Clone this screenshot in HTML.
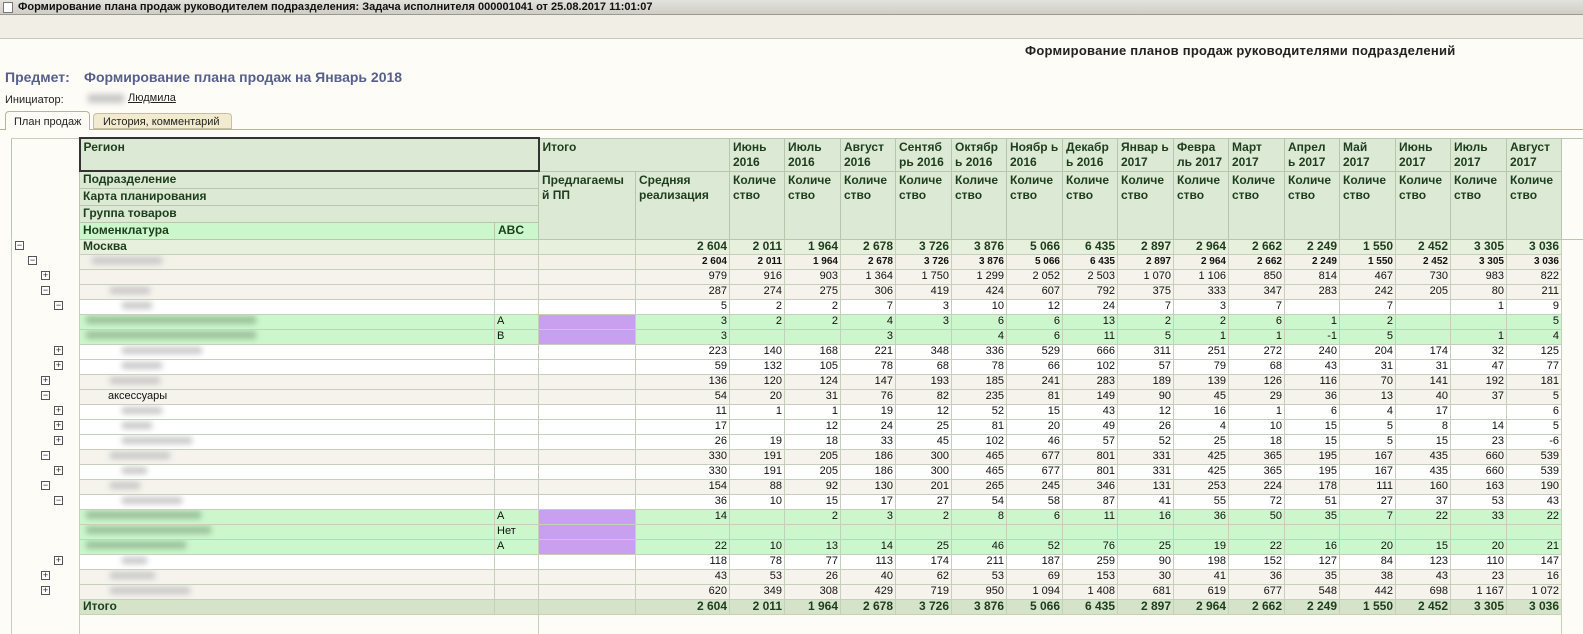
<!DOCTYPE html>
<html><head><meta charset="utf-8">
<style>
*{box-sizing:border-box;margin:0;padding:0}
body{width:1583px;height:629px;overflow:hidden;background:#fdfcf6;font-family:"Liberation Sans",Arial,sans-serif;position:relative}
.title{position:absolute;left:0;top:0;width:1583px;height:15px;background:linear-gradient(#e4e2dc,#cfcdc6);border-bottom:1px solid #9a9890;font-size:11px;font-weight:bold;line-height:14px;padding-left:18px;color:#111}
.title i{position:absolute;left:3px;top:2px;width:10px;height:11px;border:1px solid #777;background:#fff}
.tool{position:absolute;left:0;top:15px;width:1583px;height:24px;background:#f0eee5;border-bottom:1px solid #c9c6b8}
.h1{position:absolute;left:1025px;top:43px;font-size:13px;font-weight:bold;color:#222;letter-spacing:0.25px}
.pr{position:absolute;left:5px;top:69px;font-size:14px;font-weight:bold;color:#56608a}
.pv{position:absolute;left:84px;top:69px;font-size:14px;font-weight:bold;color:#56608a}
.in{position:absolute;left:5px;top:94px;font-size:11px;color:#222}
.iv{position:absolute;left:128px;top:92px;font-size:11px;color:#222;text-decoration:underline}
.blur{position:absolute;background:#c8c8c8;filter:blur(3px)}
.tab1{position:absolute;left:5px;top:111px;width:85px;height:19px;border:1px solid #b9b39b;border-bottom:none;border-radius:4px 4px 0 0;background:#fdfcf6;font-size:11px;padding:4px 0 0 8px;color:#222;z-index:2}
.tab2{position:absolute;left:93px;top:113px;width:139px;height:16px;border:1px solid #c7bf9f;border-radius:4px 4px 0 0;background:#f2ebcf;font-size:11px;padding:2px 0 0 9px;color:#222}
.tl{position:absolute;left:0;top:129px;width:1583px;border-top:1px solid #b9b39b}
table{position:absolute;left:11px;top:137px;width:1572px;border-collapse:collapse;table-layout:fixed;font-size:11px;color:#111}
td{border:1px solid #c6cfbb;height:15px;line-height:13px;padding:0 2px 0 2px;text-align:right;white-space:nowrap;overflow:hidden}
tr.hd td{background:#dce9d4;color:#1d3d1d;font-weight:bold;font-size:12px;text-align:left;vertical-align:top;line-height:15px;padding:1px 3px;border-color:#b8c6ac;white-space:normal}
td.t{border:none;border-left:1px solid #c6cfbb;border-right:1px solid #c6cfbb;background:#fdfcf6;position:relative;overflow:visible}
tr.g td{background:#e6f0dc;font-weight:bold;font-size:12px;color:#1d3d1d}
tr.s td{background:#f3f1e8;font-weight:bold;font-size:10px}
tr.b td{background:#f5f3ec}
tr.w td{background:#fff}
tr.n td{background:#ccf7cc}
tr.n td.p{background:#c9a0f0}
tr.tot td{background:#d5e4c9;font-weight:bold;font-size:12px;color:#1d3d1d}
tr td.t{background:#fdfcf6!important}
td.l{text-align:left}
.x{position:absolute;top:2px;width:9px;height:9px;border:1px solid #555;background:#fff;font-size:9px;line-height:7px;text-align:center;color:#222;font-weight:normal}
</style></head><body>
<div class="title"><i></i>Формирование плана продаж руководителем подразделения: Задача исполнителя 000001041 от 25.08.2017 11:01:07</div>
<div class="tool"></div>
<div class="h1">Формирование планов продаж руководителями подразделений</div>
<div class="pr">Предмет:</div>
<div class="pv">Формирование плана продаж на Январь 2018</div>
<div class="in">Инициатор:</div>
<div class="blur" style="left:88px;top:94px;width:36px;height:9px"></div>
<div class="iv">Людмила</div>
<div class="tab1">План продаж</div>
<div class="tab2">История, комментарий</div>
<div class="tl"></div>
<table>
<colgroup><col style="width:68px"><col style="width:415px"><col style="width:44px"><col style="width:97px"><col style="width:94px">
<col style="width:55px"><col style="width:56px"><col style="width:55px"><col style="width:56px"><col style="width:55px"><col style="width:56px"><col style="width:55px"><col style="width:56px"><col style="width:55px"><col style="width:56px"><col style="width:55px"><col style="width:56px"><col style="width:55px"><col style="width:56px"><col style="width:55px"><col style="width:22px"></colgroup>
<tr class="hd" style="height:31px"><td class="t" rowspan="5" style="border-top:1px solid #c6cfbb"></td><td colspan="2" style="border:2px solid #333">Регион</td><td colspan="2">Итого</td><td>Июнь 2016</td><td>Июль 2016</td><td>Август 2016</td><td>Сентяб рь 2016</td><td>Октябр ь 2016</td><td>Ноябр ь 2016</td><td>Декабр ь 2016</td><td>Январ ь 2017</td><td>Февра ль 2017</td><td>Март 2017</td><td>Апрел ь 2017</td><td>Май 2017</td><td>Июнь 2017</td><td>Июль 2017</td><td>Август 2017</td><td rowspan="5" style="background:#fdfcf6;border-right:none"></td></tr>
<tr class="hd" style="height:17px"><td colspan="2" style="padding:0 3px">Подразделение</td><td rowspan="4">Предлагаемы й ПП</td><td rowspan="4">Средняя реализация</td><td rowspan="4">Количе ство</td><td rowspan="4">Количе ство</td><td rowspan="4">Количе ство</td><td rowspan="4">Количе ство</td><td rowspan="4">Количе ство</td><td rowspan="4">Количе ство</td><td rowspan="4">Количе ство</td><td rowspan="4">Количе ство</td><td rowspan="4">Количе ство</td><td rowspan="4">Количе ство</td><td rowspan="4">Количе ство</td><td rowspan="4">Количе ство</td><td rowspan="4">Количе ство</td><td rowspan="4">Количе ство</td><td rowspan="4">Количе ство</td></tr>
<tr class="hd" style="height:17px"><td colspan="2" style="padding:0 3px">Карта планирования</td></tr>
<tr class="hd" style="height:17px"><td colspan="2" style="padding:0 3px">Группа товаров</td></tr>
<tr class="hd" style="height:17px"><td style="background:#ccf7cc;padding:0 3px">Номенклатура</td><td style="background:#ccf7cc;padding:0 3px">ABC</td></tr>

<tr class="g"><td class="t"><span class="x" style="left:3px">−</span></td><td class="l" style="padding-left:3px">Москва</td><td></td><td></td><td>2 604</td><td>2 011</td><td>1 964</td><td>2 678</td><td>3 726</td><td>3 876</td><td>5 066</td><td>6 435</td><td>2 897</td><td>2 964</td><td>2 662</td><td>2 249</td><td>1 550</td><td>2 452</td><td>3 305</td><td>3 036</td><td class="t"></td></tr>
<tr class="s"><td class="t"><span class="x" style="left:16px">−</span></td><td class="l"><span class="blur" style="position:relative;display:inline-block;left:10px;width:70px;height:7px"></span></td><td></td><td></td><td>2 604</td><td>2 011</td><td>1 964</td><td>2 678</td><td>3 726</td><td>3 876</td><td>5 066</td><td>6 435</td><td>2 897</td><td>2 964</td><td>2 662</td><td>2 249</td><td>1 550</td><td>2 452</td><td>3 305</td><td>3 036</td><td class="t"></td></tr>
<tr class="b"><td class="t"><span class="x" style="left:29px">+</span></td><td></td><td></td><td></td><td>979</td><td>916</td><td>903</td><td>1 364</td><td>1 750</td><td>1 299</td><td>2 052</td><td>2 503</td><td>1 070</td><td>1 106</td><td>850</td><td>814</td><td>467</td><td>730</td><td>983</td><td>822</td><td class="t"></td></tr>
<tr class="b"><td class="t"><span class="x" style="left:29px">−</span></td><td class="l"><span class="blur" style="position:relative;display:inline-block;left:28px;width:40px;height:7px"></span></td><td></td><td></td><td>287</td><td>274</td><td>275</td><td>306</td><td>419</td><td>424</td><td>607</td><td>792</td><td>375</td><td>333</td><td>347</td><td>283</td><td>242</td><td>205</td><td>80</td><td>211</td><td class="t"></td></tr>
<tr class="w"><td class="t"><span class="x" style="left:42px">−</span></td><td class="l"><span class="blur" style="position:relative;display:inline-block;left:40px;width:30px;height:7px"></span></td><td></td><td></td><td>5</td><td>2</td><td>2</td><td>7</td><td>3</td><td>10</td><td>12</td><td>24</td><td>7</td><td>3</td><td>7</td><td></td><td>7</td><td></td><td>1</td><td>9</td><td class="t"></td></tr>
<tr class="n"><td class="t"></td><td class="l"><span class="blur" style="position:relative;display:inline-block;left:4px;width:170px;height:8px;background:#9cc29c"></span></td><td class="l">A</td><td class="p"></td><td>3</td><td>2</td><td>2</td><td>4</td><td>3</td><td>6</td><td>6</td><td>13</td><td>2</td><td>2</td><td>6</td><td>1</td><td>2</td><td></td><td></td><td>5</td><td class="t"></td></tr>
<tr class="n"><td class="t"></td><td class="l"><span class="blur" style="position:relative;display:inline-block;left:4px;width:170px;height:8px;background:#9cc29c"></span></td><td class="l">B</td><td class="p"></td><td>3</td><td></td><td></td><td>3</td><td></td><td>4</td><td>6</td><td>11</td><td>5</td><td>1</td><td>1</td><td>-1</td><td>5</td><td></td><td>1</td><td>4</td><td class="t"></td></tr>
<tr class="w"><td class="t"><span class="x" style="left:42px">+</span></td><td class="l"><span class="blur" style="position:relative;display:inline-block;left:40px;width:80px;height:7px"></span></td><td></td><td></td><td>223</td><td>140</td><td>168</td><td>221</td><td>348</td><td>336</td><td>529</td><td>666</td><td>311</td><td>251</td><td>272</td><td>240</td><td>204</td><td>174</td><td>32</td><td>125</td><td class="t"></td></tr>
<tr class="w"><td class="t"><span class="x" style="left:42px">+</span></td><td class="l"><span class="blur" style="position:relative;display:inline-block;left:40px;width:40px;height:7px"></span></td><td></td><td></td><td>59</td><td>132</td><td>105</td><td>78</td><td>68</td><td>78</td><td>66</td><td>102</td><td>57</td><td>79</td><td>68</td><td>43</td><td>31</td><td>31</td><td>47</td><td>77</td><td class="t"></td></tr>
<tr class="b"><td class="t"><span class="x" style="left:29px">+</span></td><td class="l"><span class="blur" style="position:relative;display:inline-block;left:28px;width:50px;height:7px"></span></td><td></td><td></td><td>136</td><td>120</td><td>124</td><td>147</td><td>193</td><td>185</td><td>241</td><td>283</td><td>189</td><td>139</td><td>126</td><td>116</td><td>70</td><td>141</td><td>192</td><td>181</td><td class="t"></td></tr>
<tr class="b"><td class="t"><span class="x" style="left:29px">−</span></td><td class="l" style="padding-left:28px">аксессуары</td><td></td><td></td><td>54</td><td>20</td><td>31</td><td>76</td><td>82</td><td>235</td><td>81</td><td>149</td><td>90</td><td>45</td><td>29</td><td>36</td><td>13</td><td>40</td><td>37</td><td>5</td><td class="t"></td></tr>
<tr class="w"><td class="t"><span class="x" style="left:42px">+</span></td><td class="l"><span class="blur" style="position:relative;display:inline-block;left:40px;width:40px;height:7px"></span></td><td></td><td></td><td>11</td><td>1</td><td>1</td><td>19</td><td>12</td><td>52</td><td>15</td><td>43</td><td>12</td><td>16</td><td>1</td><td>6</td><td>4</td><td>17</td><td></td><td>6</td><td class="t"></td></tr>
<tr class="w"><td class="t"><span class="x" style="left:42px">+</span></td><td class="l"><span class="blur" style="position:relative;display:inline-block;left:40px;width:30px;height:7px"></span></td><td></td><td></td><td>17</td><td></td><td>12</td><td>24</td><td>25</td><td>81</td><td>20</td><td>49</td><td>26</td><td>4</td><td>10</td><td>15</td><td>5</td><td>8</td><td>14</td><td>5</td><td class="t"></td></tr>
<tr class="w"><td class="t"><span class="x" style="left:42px">+</span></td><td class="l"><span class="blur" style="position:relative;display:inline-block;left:40px;width:70px;height:7px"></span></td><td></td><td></td><td>26</td><td>19</td><td>18</td><td>33</td><td>45</td><td>102</td><td>46</td><td>57</td><td>52</td><td>25</td><td>18</td><td>15</td><td>5</td><td>15</td><td>23</td><td>-6</td><td class="t"></td></tr>
<tr class="b"><td class="t"><span class="x" style="left:29px">−</span></td><td class="l"><span class="blur" style="position:relative;display:inline-block;left:28px;width:60px;height:7px"></span></td><td></td><td></td><td>330</td><td>191</td><td>205</td><td>186</td><td>300</td><td>465</td><td>677</td><td>801</td><td>331</td><td>425</td><td>365</td><td>195</td><td>167</td><td>435</td><td>660</td><td>539</td><td class="t"></td></tr>
<tr class="w"><td class="t"><span class="x" style="left:42px">+</span></td><td class="l"><span class="blur" style="position:relative;display:inline-block;left:40px;width:25px;height:7px"></span></td><td></td><td></td><td>330</td><td>191</td><td>205</td><td>186</td><td>300</td><td>465</td><td>677</td><td>801</td><td>331</td><td>425</td><td>365</td><td>195</td><td>167</td><td>435</td><td>660</td><td>539</td><td class="t"></td></tr>
<tr class="b"><td class="t"><span class="x" style="left:29px">−</span></td><td class="l"><span class="blur" style="position:relative;display:inline-block;left:28px;width:30px;height:7px"></span></td><td></td><td></td><td>154</td><td>88</td><td>92</td><td>130</td><td>201</td><td>265</td><td>245</td><td>346</td><td>131</td><td>253</td><td>224</td><td>178</td><td>111</td><td>160</td><td>163</td><td>190</td><td class="t"></td></tr>
<tr class="w"><td class="t"><span class="x" style="left:42px">−</span></td><td class="l"><span class="blur" style="position:relative;display:inline-block;left:40px;width:60px;height:7px"></span></td><td></td><td></td><td>36</td><td>10</td><td>15</td><td>17</td><td>27</td><td>54</td><td>58</td><td>87</td><td>41</td><td>55</td><td>72</td><td>51</td><td>27</td><td>37</td><td>53</td><td>43</td><td class="t"></td></tr>
<tr class="n"><td class="t"></td><td class="l"><span class="blur" style="position:relative;display:inline-block;left:4px;width:115px;height:8px;background:#9cc29c"></span></td><td class="l">A</td><td class="p"></td><td>14</td><td></td><td>2</td><td>3</td><td>2</td><td>8</td><td>6</td><td>11</td><td>16</td><td>36</td><td>50</td><td>35</td><td>7</td><td>22</td><td>33</td><td>22</td><td class="t"></td></tr>
<tr class="n"><td class="t"></td><td class="l"><span class="blur" style="position:relative;display:inline-block;left:4px;width:125px;height:8px;background:#9cc29c"></span></td><td class="l">Нет</td><td class="p"></td><td></td><td></td><td></td><td></td><td></td><td></td><td></td><td></td><td></td><td></td><td></td><td></td><td></td><td></td><td></td><td></td><td class="t"></td></tr>
<tr class="n"><td class="t"></td><td class="l"><span class="blur" style="position:relative;display:inline-block;left:4px;width:100px;height:8px;background:#9cc29c"></span></td><td class="l">A</td><td class="p"></td><td>22</td><td>10</td><td>13</td><td>14</td><td>25</td><td>46</td><td>52</td><td>76</td><td>25</td><td>19</td><td>22</td><td>16</td><td>20</td><td>15</td><td>20</td><td>21</td><td class="t"></td></tr>
<tr class="w"><td class="t"><span class="x" style="left:42px">+</span></td><td class="l"><span class="blur" style="position:relative;display:inline-block;left:40px;width:25px;height:7px"></span></td><td></td><td></td><td>118</td><td>78</td><td>77</td><td>113</td><td>174</td><td>211</td><td>187</td><td>259</td><td>90</td><td>198</td><td>152</td><td>127</td><td>84</td><td>123</td><td>110</td><td>147</td><td class="t"></td></tr>
<tr class="b"><td class="t"><span class="x" style="left:29px">+</span></td><td class="l"><span class="blur" style="position:relative;display:inline-block;left:28px;width:45px;height:7px"></span></td><td></td><td></td><td>43</td><td>53</td><td>26</td><td>40</td><td>62</td><td>53</td><td>69</td><td>153</td><td>30</td><td>41</td><td>36</td><td>35</td><td>38</td><td>43</td><td>23</td><td>16</td><td class="t"></td></tr>
<tr class="b"><td class="t"><span class="x" style="left:29px">+</span></td><td class="l"><span class="blur" style="position:relative;display:inline-block;left:28px;width:80px;height:7px"></span></td><td></td><td></td><td>620</td><td>349</td><td>308</td><td>429</td><td>719</td><td>950</td><td>1 094</td><td>1 408</td><td>681</td><td>619</td><td>677</td><td>548</td><td>442</td><td>698</td><td>1 167</td><td>1 072</td><td class="t"></td></tr>
<tr class="tot"><td class="t"></td><td class="l" style="padding-left:3px">Итого</td><td></td><td></td><td>2 604</td><td>2 011</td><td>1 964</td><td>2 678</td><td>3 726</td><td>3 876</td><td>5 066</td><td>6 435</td><td>2 897</td><td>2 964</td><td>2 662</td><td>2 249</td><td>1 550</td><td>2 452</td><td>3 305</td><td>3 036</td><td class="t"></td></tr>
<tr style="height:20px"><td class="t"></td><td colspan="2" style="background:#fdfcf6;border-bottom:none;border-right:1px solid #c6cfbb"></td><td colspan="17" style="background:#fdfcf6;border:none;border-left:1px solid #c6cfbb"></td><td class="t"></td></tr>
</table>
</body></html>
